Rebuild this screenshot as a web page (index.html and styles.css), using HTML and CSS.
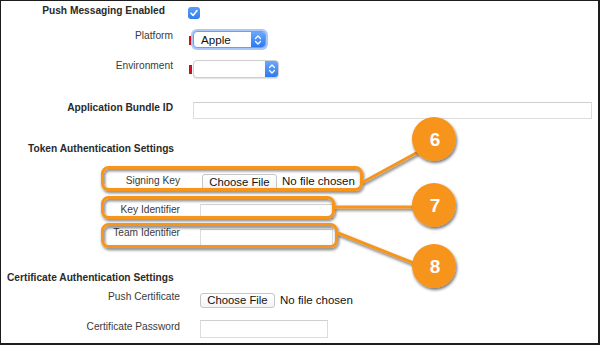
FILE: index.html
```html
<!DOCTYPE html>
<html>
<head>
<meta charset="utf-8">
<link rel="stylesheet" href="styles.css">
</head>
<body>
<div class="page">
  <div class="frame">
    <div class="row r1">
      <div class="label bold w164">Push Messaging Enabled</div>
      <div class="checkbox">
        <svg width="12" height="12" viewBox="0 0 12 12"><path d="M3 6.2 L5.1 8.4 L9 3.6" fill="none" stroke="#fff" stroke-width="1.6" stroke-linecap="round" stroke-linejoin="round"/></svg>
      </div>
    </div>
    <div class="row r2">
      <div class="label w172">Platform</div>
      <div class="req req1"></div>
      <div class="select sel-apple">
        <span class="sel-text">Apple</span>
        <span class="sel-btn"><svg width="8" height="12" viewBox="0 0 8 12"><path d="M1.5 4.5 L4 2 L6.5 4.5 M1.5 7.5 L4 10 L6.5 7.5" fill="none" stroke="#fff" stroke-width="1.3" stroke-linecap="round" stroke-linejoin="round"/></svg></span>
      </div>
    </div>
    <div class="row r3">
      <div class="label w172">Environment</div>
      <div class="req req2"></div>
      <div class="select sel-env">
        <span class="sel-text"></span>
        <span class="sel-btn"><svg width="8" height="12" viewBox="0 0 8 12"><path d="M1.5 4.5 L4 2 L6.5 4.5 M1.5 7.5 L4 10 L6.5 7.5" fill="none" stroke="#fff" stroke-width="1.3" stroke-linecap="round" stroke-linejoin="round"/></svg></span>
      </div>
    </div>
    <div class="row r4">
      <div class="label bold w172">Application Bundle ID</div>
      <div class="field f-bundle"></div>
    </div>
    <div class="heading h1">Token Authentication Settings</div>
    <div class="row r5">
      <div class="label w179">Signing Key</div>
      <div class="filebtn fb1">Choose File</div>
      <div class="nofile">No file chosen</div>
    </div>
    <div class="row r6">
      <div class="label w179">Key Identifier</div>
      <div class="field f-key"></div>
    </div>
    <div class="row r7">
      <div class="label w179">Team Identifier</div>
      <div class="field f-team"></div>
    </div>
    <div class="heading h2">Certificate Authentication Settings</div>
    <div class="row r8">
      <div class="label w179">Push Certificate</div>
      <div class="filebtn fb2">Choose File</div>
      <div class="nofile">No file chosen</div>
    </div>
    <div class="row r9">
      <div class="label w179">Certificate Password</div>
      <div class="field f-pass"></div>
    </div>
  </div>
  <svg class="overlay" width="600" height="345" viewBox="0 0 600 345">
    <defs>
      <filter id="sh" x="-20%" y="-20%" width="140%" height="160%">
        <feDropShadow dx="1" dy="2" stdDeviation="1.4" flood-color="#000" flood-opacity="0.55"/>
      </filter>
    </defs>
    <g filter="url(#sh)" stroke="#f7941d" stroke-width="3" fill="none">
      <rect x="102.5" y="167.5" width="259" height="22" rx="6"/>
      <rect x="102.5" y="197.5" width="231" height="20" rx="6"/>
      <rect x="102.5" y="224.5" width="234" height="22" rx="6"/>
      <line x1="363" y1="182" x2="418" y2="152"/>
      <line x1="335" y1="207" x2="416" y2="207"/>
      <line x1="338" y1="233" x2="416" y2="264"/>
    </g>
    <g filter="url(#sh)" fill="#f7941d">
      <circle cx="434" cy="139" r="22"/>
      <circle cx="434" cy="205" r="22"/>
      <circle cx="434" cy="266" r="22"/>
    </g>
    <g class="num" fill="#fff" text-anchor="middle">
      <text x="435" y="146">6</text>
      <text x="435" y="212">7</text>
      <text x="435" y="273">8</text>
    </g>
  </svg>
</div>
</body>
</html>
```
FILE: styles.css
```css
* { box-sizing: border-box; }
html, body { margin: 0; padding: 0; background: #fff; }
body { font-family: "Liberation Sans", Arial, sans-serif; }

.page { position: relative; width: 600px; height: 345px; }

.frame {
  width: 600px;
  height: 345px;
  border-top: 1px solid #1c1c1c;
  border-left: 1px solid #1c1c1c;
  border-right: 2px solid #1c1c1c;
  border-bottom: 2px solid #1c1c1c;
  overflow: hidden;
  background: #fff;
}

.row { display: flex; align-items: flex-start; }

.label {
  font-size: 10.2px;
  line-height: 13px;
  color: #3a3a3a;
  text-align: right;
  flex: none;
  white-space: nowrap;
}
.bold { font-weight: bold; color: #2a2a2a; }
.w164 { width: 164px; }
.w172 { width: 172px; }
.w179 { width: 179px; }

.heading {
  font-size: 10.2px;
  line-height: 13px;
  font-weight: bold;
  color: #2a2a2a;
  white-space: nowrap;
}

.r1 { margin-top: 3px; height: 16px; }
.r2 { margin-top: 9px; height: 20px; }
.r3 { margin-top: 10px; height: 19px; }
.r4 { margin-top: 23px; height: 18px; }
.h1 { margin-top: 23px; margin-left: 27px; }
.r5 { margin-top: 19px; height: 16px; }
.r6 { margin-top: 13px; height: 15px; }
.r7 { margin-top: 8px; height: 20px; }
.h2 { margin-top: 25px; margin-left: 6px; }
.r8 { margin-top: 6px; height: 17px; }
.r9 { margin-top: 13px; height: 18px; }

.checkbox {
  width: 12px;
  height: 12px;
  margin-left: 23px;
  margin-top: 3px;
  border-radius: 3px;
  background: linear-gradient(#5a9df8, #2f7ef0);
  display: flex;
}

.req { width: 3px; height: 9px; background: #cc0f1c; margin-left: 16px; flex: none; }
.req1 { margin-top: 7px; }
.req2 { margin-top: 6px; }

.select {
  display: flex;
  margin-left: 1px;
  background: #fff;
  border-radius: 4px;
  overflow: hidden;
  flex: none;
}
.sel-apple {
  width: 73px;
  height: 17px;
  margin-top: 2px;
  border: 1px solid #6f9fe8;
  box-shadow: 0 0 0 2px #a9c8f6;
}
.sel-env {
  width: 86px;
  height: 18px;
  margin-top: 1px;
  border: 1px solid #cfcfcf;
  box-shadow: 0 1px 1px rgba(0,0,0,0.12);
}
.sel-text {
  flex: 1;
  font-size: 11.6px;
  line-height: 15px;
  color: #111;
  padding-left: 7px;
}
.sel-btn {
  width: 14px;
  background: linear-gradient(#68a8fb, #2d79ef);
  display: flex;
  align-items: center;
  justify-content: center;
}
.sel-env .sel-btn { width: 13px; }

.field {
  border: 1px solid #dcdcdc;
  border-top-color: #cfcfcf;
  background: #fff;
  flex: none;
}
.f-bundle { width: 399px; height: 17px; margin-left: 20px; margin-top: 1px; }
.f-key { width: 133px; height: 15px; margin-left: 20px; margin-top: 1px; }
.f-team { width: 133px; height: 17px; margin-left: 20px; margin-top: 3px; }
.f-pass { width: 128px; height: 18px; margin-left: 20px; margin-top: 0px; }

.filebtn {
  flex: none;
  width: 75px;
  font-size: 11.3px;
  color: #111;
  text-align: center;
  background: linear-gradient(#ffffff, #f4f4f4);
  border: 1px solid #c6c6c6;
  border-radius: 3px;
  white-space: nowrap;
}
.fb1 { margin-left: 22px; height: 17px; line-height: 15px; margin-top: 0px; }
.fb2 { margin-left: 20px; height: 15px; line-height: 13px; margin-top: 3px; }

.nofile {
  font-size: 11.5px;
  color: #111;
  margin-left: 5px;
  white-space: nowrap;
  line-height: 15px;
}
.r8 .nofile { margin-top: 3px; line-height: 14px; }

.overlay { position: absolute; left: 0; top: 0; }
.num text { font-family: "Liberation Sans", Arial, sans-serif; font-weight: bold; font-size: 19px; }
```
